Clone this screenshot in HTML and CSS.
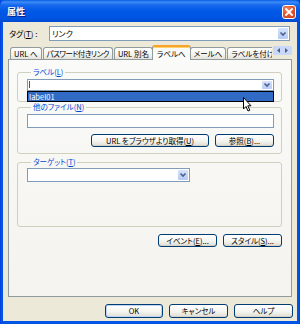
FILE: index.html
```html
<!DOCTYPE html>
<html lang="ja">
<head>
<meta charset="utf-8">
<title>属性</title>
<link rel="stylesheet" href="styles.css">
</head>
<body>
<div class="window">
  <div class="titlebar">
    <span class="title">属性</span>
    <span class="close">
      <svg width="14" height="14" viewBox="0 0 14 14"><path d="M4 4 L10 10 M10 4 L4 10" stroke="#fff" stroke-width="1.8" stroke-linecap="square"/></svg>
    </span>
  </div>
  <div class="client">
    <div class="tag-row">
      <span class="tag-label">タグ(<u>T</u>) :</span>
      <div class="combo combo-tag">
        <span class="combo-text">リンク</span>
        <span class="drop"><svg width="10" height="10" viewBox="0 0 10 10"><path d="M2.5 3.5 L5 6 L7.5 3.5" fill="none" stroke="#4D6185" stroke-width="1.6"/></svg></span>
      </div>
    </div>
    <div class="tabstrip">
      <div class="tabs">
        <span class="tab">URL へ</span>
        <span class="tab tab-long">パスワード付きリンク</span>
        <span class="tab">URL 別名</span>
        <span class="tab active">ラベルへ</span>
        <span class="tab">メールへ</span>
        <span class="tab">ラベルを付ける</span>
      </div>
      <span class="tab-scroll">
        <svg width="19" height="9" viewBox="0 0 19 9"><rect width="19" height="9" rx="1" fill="#C9D8F8"/><path d="M7 2 L4 4.5 L7 7 Z" fill="#4D6185"/><path d="M12 2 L15 4.5 L12 7 Z" fill="#4D6185"/></svg>
      </span>
    </div>
    <div class="panel">
      <fieldset class="group group-label">
        <legend>ラベル(<u>L</u>)</legend>
        <div class="combo-wrap">
          <div class="combo combo-label">
            <span class="caret"></span>
            <span class="drop"><svg width="10" height="10" viewBox="0 0 10 10"><path d="M2.5 3.5 L5 6 L7.5 3.5" fill="none" stroke="#4D6185" stroke-width="1.6"/></svg></span>
          </div>
          <div class="droplist">
            <div class="option selected">label01</div>
          </div>
        </div>
      </fieldset>
      <fieldset class="group group-file">
        <legend>他のファイル(<u>N</u>)</legend>
        <div class="textbox"></div>
        <div class="button-row">
          <span class="btn btn-wide">URL をブラウザより取得(<u>U</u>)</span>
          <span class="btn">参照(<u>B</u>)...</span>
        </div>
      </fieldset>
      <fieldset class="group group-target">
        <legend>ターゲット(<u>T</u>)</legend>
        <div class="combo combo-target">
          <span class="combo-text"></span>
          <span class="drop"><svg width="10" height="10" viewBox="0 0 10 10"><path d="M2.5 3.5 L5 6 L7.5 3.5" fill="none" stroke="#4D6185" stroke-width="1.6"/></svg></span>
        </div>
      </fieldset>
      <div class="button-row panel-buttons">
        <span class="btn">イベント(<u>E</u>)...</span>
        <span class="btn">スタイル(<u>S</u>)...</span>
      </div>
    </div>
    <div class="dialog-buttons">
      <span class="btn btn-default">OK</span>
      <span class="btn">キャンセル</span>
      <span class="btn">ヘルプ</span>
    </div>
  </div>
  <svg class="cursor" width="10" height="16" viewBox="0 0 10 16"><path d="M0.5 0.5 L0.5 12 L3 9.5 L5 14 L6.8 13.2 L4.8 8.8 L8 8.8 Z" fill="#fff" stroke="#000" stroke-width="1" stroke-linejoin="round"/></svg>
</div>
</body>
</html>
```
FILE: styles.css
```css
* { box-sizing: border-box; }
html, body { margin: 0; padding: 0; }
body {
  width: 300px;
  height: 324px;
  overflow: hidden;
  font-family: "Noto Sans CJK JP", "Noto Sans", sans-serif;
  font-size: 7.5px;
  font-feature-settings: "palt" 1;
  color: #000;
  line-height: 1;
}
u { text-decoration: underline; text-underline-offset: 1px; }

.window {
  position: relative;
  width: 300px;
  height: 324px;
  display: flex;
  flex-direction: column;
  background: linear-gradient(to right, #0831D9 0, #0055E5 1px, #0055E5 299px, #0831D9 300px);
}

.titlebar {
  height: 22px;
  flex: none;
  display: flex;
  align-items: center;
  justify-content: space-between;
  padding: 0 4px 0 7px;
  background: linear-gradient(#0A5CE6 0, #3D8DF6 2px, #1769EE 5px, #0058E6 11px, #0055E2 18px, #0049D2 22px);
  border-radius: 6px 6px 0 0;
}
.title {
  color: #fff;
  font-weight: bold;
  font-size: 9px;
  text-shadow: 1px 1px 0 #0A1E8C;
}
.close {
  width: 14px;
  height: 14px;
  border: 1px solid #fff;
  border-radius: 3px;
  background: radial-gradient(circle at 35% 30%, #F08A6A 0, #E2582F 45%, #C63E17 100%);
  display: flex;
  align-items: center;
  justify-content: center;
  margin-top: 1px;
}
.close svg { display: block; margin: -1px; }

.client {
  flex: 1;
  margin: 0 3px 3px 3px;
  background: #ECE9D8;
  display: flex;
  flex-direction: column;
}

.tag-row {
  display: flex;
  align-items: center;
  padding: 4px 7px 0 6px;
}
.tag-label { width: 40px; flex: none; font-size: 8px; }

.combo {
  position: relative;
  display: flex;
  align-items: center;
  background: #fff;
  border: 1px solid #7F9DB9;
}
.combo-tag { flex: 1; height: 15px; }
.combo-text { flex: 1; padding-left: 2px; font-size: 8px; }
.drop {
  flex: none;
  width: 10px;
  align-self: stretch;
  margin: 1px;
  border-radius: 1px;
  background: linear-gradient(#D6E3FD, #B6CAF5);
  display: flex;
  align-items: center;
  justify-content: center;
}
.drop svg { display: block; }

.tabstrip {
  display: flex;
  align-items: flex-end;
  height: 14px;
  margin: 4px 5px 0 5px;
  padding-left: 2px;
  position: relative;
  z-index: 1;
}
.tabs {
  flex: 1;
  display: flex;
  align-items: flex-end;
  overflow: hidden;
  height: 15px;
  margin-bottom: -1px;
  min-width: 0;
}
.tab {
  flex: none;
  height: 12px;
  margin-bottom: 1px;
  padding: 0 3px;
  margin-right: 1px;
  display: flex;
  align-items: center;
  white-space: nowrap;
  border: 1px solid #919B9C;
  border-bottom: none;
  border-radius: 3px 3px 0 0;
  background: linear-gradient(#FFFFFF, #F3F3EF 60%, #E3E2DA);
}
.tab-long { letter-spacing: -0.5px; }
.tab.active {
  height: 15px;
  margin-bottom: 0;
  margin-left: -2px;
  margin-right: -1px;
  padding: 0 4px;
  border-top: 2px solid #F7A32E;
  box-shadow: inset 0 1px 0 #FFD36A;
  background: #FAFAF8;
  position: relative;
  z-index: 2;
}
.tab-scroll {
  flex: none;
  width: 19px;
  height: 9px;
  margin-bottom: 4px;
  margin-left: 1px;
}
.tab-scroll svg { display: block; }

.panel {
  height: 238px;
  flex: none;
  margin: 0 5px 0 5px;
  border: 1px solid #919B9C;
  background: linear-gradient(#FAFAF8, #F4F3EF);
  padding: 7px 9px 0 8px;
  display: flex;
  flex-direction: column;
}

.group {
  margin: 0;
  padding: 2px 7px 10px 9px;
  border: 1px solid #D0D0BF;
  border-radius: 3px;
  min-width: 0;
}
.group legend {
  padding: 0 2px;
  margin-left: 4px;
  line-height: 10px;
  height: 10px;
  color: #0046D5;
  white-space: nowrap;
}
.group-file {
  margin-top: 0;
  padding: 2px 7px 6px 9px;
}
.group-target {
  margin-top: 3px;
  height: 70px;
  padding: 1px 7px 0 9px;
}

.combo-wrap { position: relative; }
.combo-label { height: 12px; }
.caret {
  flex: 1;
  height: 100%;
  position: relative;
}
.caret::before {
  content: "";
  display: block;
  width: 1px;
  height: 7px;
  margin: 1px 0 0 1px;
  background: #555;
}
.droplist {
  position: absolute;
  left: 0;
  right: 0;
  top: 100%;
  height: 11px;
  border: 1px solid #000;
  background: #fff;
  z-index: 5;
}
.option {
  height: 9px;
  line-height: 9px;
  padding-left: 1px;
}
.option.selected { background: #316AC5; color: #fff; }

.textbox {
  height: 14px;
  background: #fff;
  border: 1px solid #7F9DB9;
}
.combo-target { width: 163px; height: 14px; }

.button-row {
  display: flex;
  justify-content: flex-end;
  gap: 6px;
  margin-top: 6px;
}
.panel-buttons { margin-top: 7px; }

.btn {
  flex: none;
  width: 59px;
  height: 13px;
  display: flex;
  align-items: center;
  justify-content: center;
  white-space: nowrap;
  border: 1px solid #003C74;
  border-radius: 3px;
  background: linear-gradient(#FFFFFF, #F4F4F0 55%, #E3E1D8 90%, #D6D0C5);
  box-shadow: inset 0 -1px 0 #D8D2C6;
}
.btn-wide { width: 118px; }

.dialog-buttons {
  display: flex;
  justify-content: flex-end;
  gap: 6px;
  margin-top: 7px;
  padding-right: 4px;
}
.dialog-buttons .btn { height: 14px; }
.btn-default { width: 58px; box-shadow: inset 0 0 0 1px #BCD4F6, inset 0 -1px 0 #89ADE4; }

.cursor {
  position: absolute;
  left: 243px;
  top: 97px;
  z-index: 10;
}
```
